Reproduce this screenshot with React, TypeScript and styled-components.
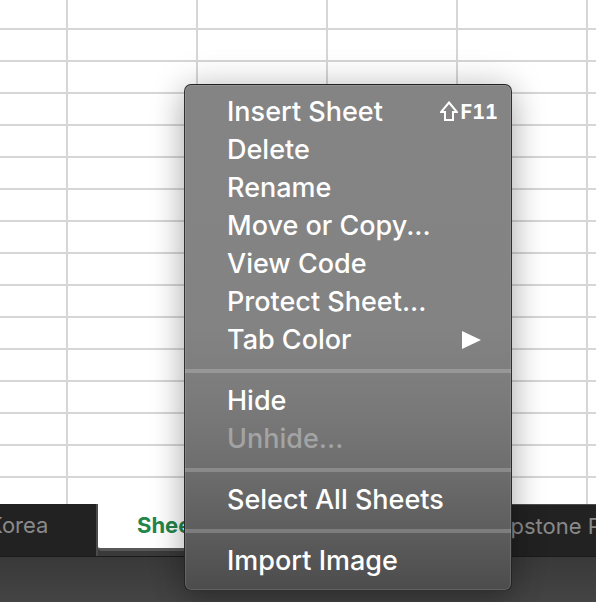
import React from "react";
import styled, { createGlobalStyle } from "styled-components";

const GlobalStyle = createGlobalStyle`
  html, body { margin: 0; padding: 0; }
  body {
    font-family: Inter, "Noto Sans", "Liberation Sans", sans-serif;
    background: #ffffff;
    overflow: hidden;
  }
`;

const Page = styled.div`
  position: relative;
  width: 596px;
  height: 602px;
  display: flex;
  flex-direction: column;
  overflow: hidden;
  background: #ffffff;
`;

const Sheet = styled.div`
  flex: 1;
  overflow: hidden;
  display: grid;
  grid-template-columns: 68px repeat(5, 130px);
  grid-template-rows: 30px;
  grid-auto-rows: 32px;
  background: #ffffff;
`;

const Cell = styled.div`
  box-sizing: border-box;
  border-right: 2px solid #d6d6d6;
  border-bottom: 2px solid #d6d6d6;
`;

const TabBar = styled.div`
  height: 52px;
  flex: none;
  display: flex;
  align-items: flex-start;
  background: #3a3a3a;
  border-bottom: 1px solid #1b1b1b;
  overflow: hidden;
`;

const TabStrip = styled.div`
  display: flex;
  align-items: flex-start;
  margin-left: -42px;
`;

const Tab = styled.div<{ $active?: boolean; $width: number; $pad: number; $divider?: boolean }>`
  box-sizing: border-box;
  flex: none;
  width: ${(p) => p.$width}px;
  height: ${(p) => (p.$active ? 47 : 52)}px;
  padding: 8px 0 0 ${(p) => p.$pad}px;
  font-size: 22px;
  line-height: 26px;
  white-space: nowrap;
  overflow: hidden;
  background: ${(p) => (p.$active ? "#ffffff" : "#222222")};
  color: ${(p) => (p.$active ? "#23864a" : "#8a8a8a")};
  font-weight: ${(p) => (p.$active ? 700 : 400)};
  border-bottom: ${(p) => (p.$active ? "3px solid #585858" : "none")};
  border-bottom-left-radius: ${(p) => (p.$active ? 4 : 0)}px;
  border-right: ${(p) => (p.$divider ? "2px solid #4b4b4b" : "none")};
  border-top: ${(p) => (!p.$active && !p.$divider ? "1px solid #4e4e4e" : "none")};
`;

const StatusBar = styled.div`
  flex: none;
  height: 45px;
  background: linear-gradient(180deg, #393939 0%, #444444 100%);
`;

const Menu = styled.div`
  position: absolute;
  top: 84px;
  left: 184px;
  width: 328px;
  box-sizing: border-box;
  padding: 8px 0 10px;
  border: 1px solid rgba(20, 20, 20, 0.75);
  border-radius: 7px;
  background: linear-gradient(
    180deg,
    #848484 0%,
    #838383 48%,
    #7b7b7b 62%,
    #6f6f6f 75%,
    #5f5f5f 87%,
    #4c4c4c 100%
  );
  box-shadow: inset 0 0 0 1px rgba(255, 255, 255, 0.12),
    0 0 36px rgba(0, 0, 0, 0.18), 0 12px 30px rgba(0, 0, 0, 0.2);
  color: #ffffff;
`;

const Item = styled.div<{ $disabled?: boolean }>`
  height: 38px;
  display: flex;
  align-items: center;
  justify-content: space-between;
  padding: 0 13px 0 42px;
  font-size: 27px;
  font-weight: 500;
  line-height: 38px;
  white-space: nowrap;
  color: ${(p) => (p.$disabled ? "rgba(255,255,255,0.36)" : "#ffffff")};
`;

const Separator = styled.div`
  height: 4px;
  margin: 10px 0 9px;
  background: rgba(255, 255, 255, 0.2);
`;

const Shortcut = styled.span`
  display: flex;
  flex: none;
  align-items: flex-end;
  gap: 2px;
  font-size: 20px;
  font-weight: 700;
  line-height: 20px;
  letter-spacing: 0;
  font-variant-numeric: tabular-nums;
  font-feature-settings: "tnum" 1;
  margin-bottom: 2px;
`;

const ShiftSvg = styled.svg`
  flex: none;
  display: block;
  margin-bottom: 1px;
`;

const SubArrow = styled.svg`
  flex: none;
  margin-right: 17px;
  display: block;
`;

const ShiftIcon = () => (
  <ShiftSvg width="18" height="20" viewBox="0 0 18 20" aria-hidden="true">
    <path
      d="M9 1.5 L17 11 L13 11 L13 19 L5 19 L5 11 L1 11 Z"
      fill="none"
      stroke="#ffffff"
      strokeWidth="2"
      strokeLinejoin="miter"
    />
  </ShiftSvg>
);

type Entry =
  | { kind: "item"; label: string; shortcut?: boolean; submenu?: boolean; disabled?: boolean }
  | { kind: "sep" };

const entries: Entry[] = [
  { kind: "item", label: "Insert Sheet", shortcut: true },
  { kind: "item", label: "Delete" },
  { kind: "item", label: "Rename" },
  { kind: "item", label: "Move or Copy..." },
  { kind: "item", label: "View Code" },
  { kind: "item", label: "Protect Sheet..." },
  { kind: "item", label: "Tab Color", submenu: true },
  { kind: "sep" },
  { kind: "item", label: "Hide" },
  { kind: "item", label: "Unhide...", disabled: true },
  { kind: "sep" },
  { kind: "item", label: "Select All Sheets" },
  { kind: "sep" },
  { kind: "item", label: "Import Image" },
];

export default function App() {
  const cells = Array.from({ length: 16 * 6 });
  return (
    <Page>
      <GlobalStyle />
      <Sheet>
        {cells.map((_, i) => (
          <Cell key={i} />
        ))}
      </Sheet>
      <TabBar>
        <TabStrip>
          <Tab $width={140} $pad={30} $divider>
            Korea
          </Tab>
          <Tab $width={348} $pad={39} $active>
            Sheet1
          </Tab>
          <Tab $width={200} $pad={36}>
            Capstone Project
          </Tab>
        </TabStrip>
      </TabBar>
      <StatusBar />
      <Menu>
        {entries.map((e, i) =>
          e.kind === "sep" ? (
            <Separator key={i} />
          ) : (
            <Item key={i} $disabled={e.disabled}>
              <span>{e.label}</span>
              {e.shortcut && (
                <Shortcut>
                  <ShiftIcon />
                  F11
                </Shortcut>
              )}
              {e.submenu && (
                <SubArrow width="19" height="18" viewBox="0 0 19 18" aria-hidden="true">
                  <polygon points="0,0 19,9 0,18" fill="#ffffff" />
                </SubArrow>
              )}
            </Item>
          )
        )}
      </Menu>
    </Page>
  );
}
